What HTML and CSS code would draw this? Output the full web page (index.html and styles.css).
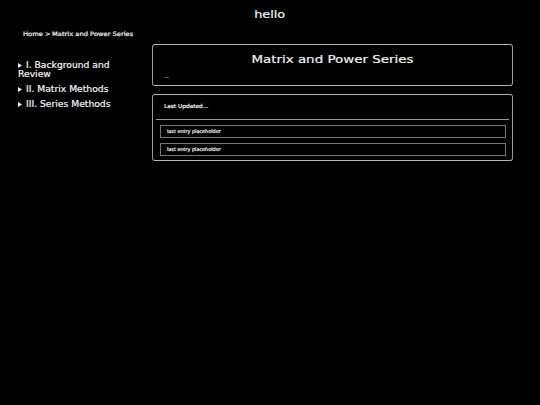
FILE: index.html
```html
<!DOCTYPE html>
<html lang="en">
<head>
<meta charset="utf-8">
<title>Matrix and Power Series</title>
<link rel="stylesheet" href="styles.css">
</head>
<body>
<header class="site-header"><span class="wide">hello</span></header>
<nav class="breadcrumb"><span class="wide home">Home</span><span class="wide sep">&gt;</span><span class="wide current">Matrix and Power Series</span></nav>
<div class="layout">
  <aside class="sidebar">
    <div class="topic"><i class="arrow"></i><span class="wide">I. Background and</span><br><span class="wide">Review</span></div>
    <div class="topic"><i class="arrow"></i><span class="wide">II. Matrix Methods</span></div>
    <div class="topic"><i class="arrow"></i><span class="wide">III. Series Methods</span></div>
  </aside>
  <main class="content">
    <section class="card intro">
      <h1><span class="wide">Matrix and Power Series</span></h1>
      <p class="wide">...</p>
    </section>
    <section class="card updates">
      <h2><span class="wide">Last Updated...</span></h2>
      <div class="entry"><span class="wide">last entry placeholder</span></div>
      <div class="entry"><span class="wide">last entry placeholder</span></div>
    </section>
  </main>
</div>
</body>
</html>
```

FILE: styles.css
```css
* { box-sizing: border-box; }
body { margin: 0; background: #000; color: #f2f2f2; font-family: "DejaVu Sans", sans-serif; overflow: hidden; }
.wide { display: inline-block; transform: scaleX(1.16); transform-origin: left; white-space: nowrap; -webkit-text-stroke: 0.2px currentColor; }
.site-header { height: 28px; line-height: 28px; text-align: center; font-size: 10.5px; }
.site-header .wide { transform: scaleX(1.22); transform-origin: center; }
.breadcrumb { display: flex; height: 12px; line-height: 12px; padding-left: 23px; font-size: 6px; }
.breadcrumb .wide { transform: scaleX(1.12); }
.home { width: 22px; }
.sep { width: 7px; }
.layout { display: flex; padding-top: 3px; }
.sidebar { width: 152px; padding: 18px 0 0 18px; font-size: 8px; line-height: 9px; }
.sidebar .wide { transform: scaleX(1.15); }
.topic { margin-bottom: 6px; }
.arrow { display: inline-block; width: 4px; height: 5px; margin-right: 4px; background: #f2f2f2; clip-path: polygon(0 0, 100% 50%, 0 100%); }
.content { width: 361px; padding-top: 1px; }
.card { border: 1px solid #b4b4b4; border-left-color: #999; border-right-color: #999; border-radius: 3px; margin-bottom: 8px; }
.intro { height: 42px; }
h1 { margin: 0; padding-top: 8px; font-size: 11px; line-height: 14px; font-weight: 400; text-align: center; }
h1 .wide { transform: scaleX(1.22); transform-origin: center; }
.intro p { display: block; width: fit-content; margin: 5px 0 0 11px; font-size: 5px; line-height: 8px; color: #ccc; transform: none; }
.updates { height: 67px; padding: 0 3px; }
h2 { margin: 0 0 5px; height: 25px; padding-left: 8px; border-bottom: 1px solid #999; font-size: 5.5px; line-height: 22px; font-weight: 400; }
h2 .wide { transform: scaleX(1.06); }
.entry { height: 13px; margin: 0 3px 5px 4px; padding-left: 6px; border: 1px solid #777; font-size: 5px; line-height: 11px; }
.entry .wide { transform: scaleX(0.98); }
```
